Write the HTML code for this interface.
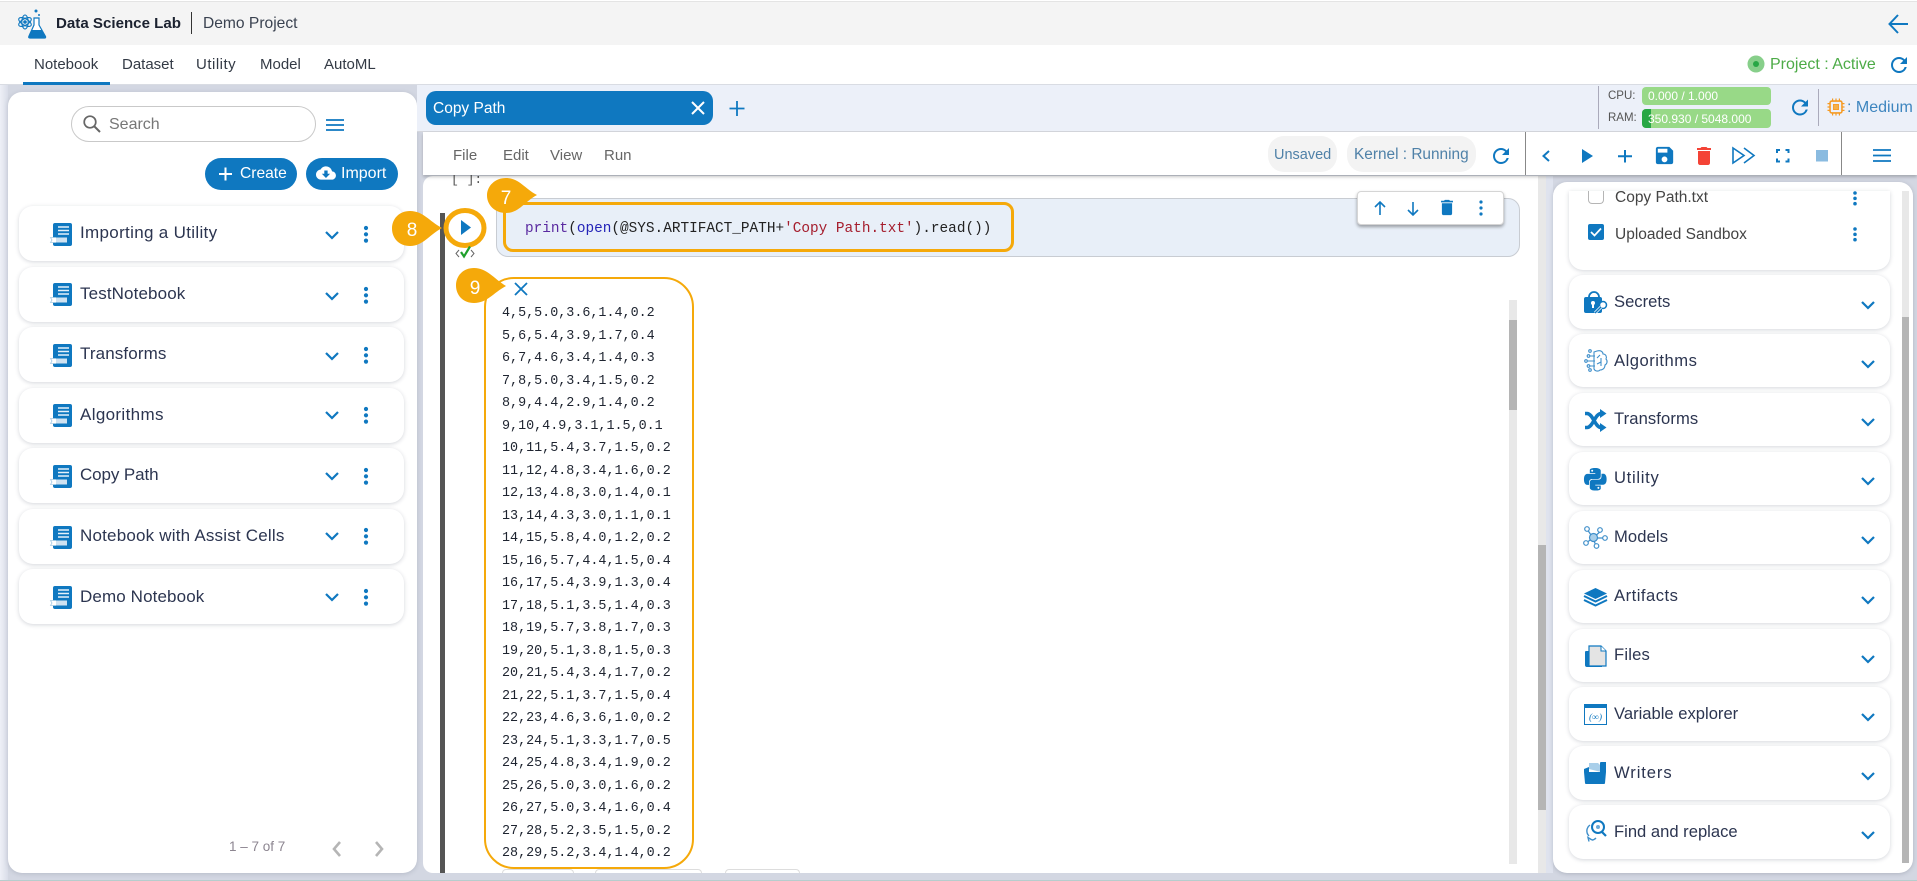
<!DOCTYPE html>
<html lang="en"><head><meta charset="utf-8"><title>Data Science Lab</title>
<style>
html,body{margin:0;padding:0;width:1917px;height:881px;overflow:hidden;background:#d3d7e2;font-family:"Liberation Sans",sans-serif;color:#2b3350}
.b{position:absolute;box-sizing:border-box}
.t{position:absolute;white-space:nowrap;line-height:20px;height:20px}
.card{position:absolute;background:#fff;border-radius:14px;box-shadow:0 1px 4px rgba(60,70,90,.22)}
.l{font-size:17px;left:80px;letter-spacing:.12px;color:#2c3550}
.r{font-size:16.6px;left:1614px;color:#2c3550}
.n{font-size:15px;top:55px;color:#333a45}
.m{font-size:15px;top:146px;color:#666}
.out{position:absolute;left:502px;top:303px;font:13.4px/22.5px "Liberation Mono",monospace;color:#1e2430;white-space:pre;margin:0}
svg.o{position:absolute;left:0;top:0;z-index:5}
.top{z-index:6}
</style></head><body>
<!-- page frame -->
<div class="b" style="left:0;top:0;width:1917px;height:1px;background:#fff"></div>
<div class="b" style="left:0;top:1px;width:1917px;height:44px;background:#f4f4f4;border-top:1px solid #e4e4e4"></div>
<div class="b" style="left:0;top:45px;width:1917px;height:40px;background:#fff;border-bottom:1px solid #d9dce3"></div>
<div class="b" style="left:0;top:85px;width:8px;height:795px;background:linear-gradient(90deg,#eef0f7,#d9dde8)"></div>
<div class="b" style="left:0;top:880px;width:1917px;height:1px;background:#b6cdcd"></div>
<div class="b" style="left:23px;top:82px;width:87px;height:3px;background:#0f78c0"></div>
<div class="t" style="left:56px;top:14px;font-size:15.1px;font-weight:bold;color:#1c2230">Data Science Lab</div>
<div class="b" style="left:191px;top:12px;width:1px;height:22px;background:#333"></div>
<div class="t" style="left:203px;top:14px;font-size:15.6px;color:#3a4250">Demo Project</div>
<div class="t n" style="left:34px">Notebook</div><div class="t n" style="left:122px">Dataset</div><div class="t n" style="left:196px;letter-spacing:.5px">Utility</div><div class="t n" style="left:260px">Model</div><div class="t n" style="left:324px">AutoML</div>
<div class="t" style="left:1770px;top:55px;font-size:16px;color:#4dab47">Project : Active</div>

<!-- left panel -->
<div class="b" style="left:8px;top:92px;width:409px;height:781px;background:#fff;border-radius:14px;box-shadow:0 1px 5px rgba(70,80,100,.2)"></div>
<div class="b" style="left:71px;top:106px;width:245px;height:36px;border:1px solid #c9c9c9;border-radius:18px;background:#fff"></div>
<div class="t" style="left:109px;top:115px;font-size:16px;color:#777">Search</div>
<div class="b" style="left:205px;top:158px;width:92px;height:32px;border-radius:16px;background:#0f78c0"></div>
<div class="t" style="left:240px;top:164px;font-size:15.6px;color:#fff">Create</div>
<div class="b" style="left:306px;top:158px;width:92px;height:32px;border-radius:16px;background:#0f78c0"></div>
<div class="t" style="left:341px;top:164px;font-size:16px;color:#fff">Import</div>
<div class="card" style="left:19px;top:206px;width:385px;height:55px"></div>
<div class="card" style="left:19px;top:267px;width:385px;height:55px"></div>
<div class="card" style="left:19px;top:327px;width:385px;height:55px"></div>
<div class="card" style="left:19px;top:388px;width:385px;height:55px"></div>
<div class="card" style="left:19px;top:448px;width:385px;height:55px"></div>
<div class="card" style="left:19px;top:509px;width:385px;height:55px"></div>
<div class="card" style="left:19px;top:569px;width:385px;height:55px"></div>
<div class="t l" style="top:223px;letter-spacing:.32px">Importing a Utility</div>
<div class="t l" style="top:284px">TestNotebook</div>
<div class="t l" style="top:344px">Transforms</div>
<div class="t l" style="top:405px;letter-spacing:.35px">Algorithms</div>
<div class="t l" style="top:465px;letter-spacing:-.1px">Copy Path</div>
<div class="t l" style="top:526px;letter-spacing:.2px">Notebook with Assist Cells</div>
<div class="t l" style="top:587px">Demo Notebook</div>
<div class="t" style="left:229px;top:837px;font-size:13.5px;color:#8c8590">1 – 7 of 7</div>

<!-- tab bar -->
<div class="b" style="left:417px;top:85px;width:1500px;height:47px;background:#ecf0f9;border-bottom:1px solid #d5d7dd"></div>
<div class="b" style="left:426px;top:91px;width:287px;height:34px;background:#0f78c0;border-radius:10px"></div>
<div class="t" style="left:433px;top:99px;font-size:15.5px;color:#fff">Copy Path</div>
<div class="b" style="left:1598px;top:86px;width:1px;height:43px;background:#aab"></div>
<div class="t" style="left:1608px;top:86px;font-size:11.5px;color:#555">CPU:</div>
<div class="t" style="left:1608px;top:108px;font-size:11.5px;color:#555">RAM:</div>
<div class="b" style="left:1642px;top:87px;width:129px;height:18px;background:#98d987;border-radius:4px"></div>
<div class="b" style="left:1642px;top:109px;width:129px;height:19px;background:#98d987;border-radius:4px;overflow:hidden"><div style="width:9px;height:19px;background:#28a745"></div></div>
<div class="t" style="left:1648px;top:86px;font-size:12px;color:#fff">0.000 / 1.000</div>
<div class="t" style="left:1648px;top:109px;font-size:12px;color:#fff">350.930 / 5048.000</div>
<div class="b" style="left:1818px;top:89px;width:1px;height:37px;background:#aab"></div>
<div class="t" style="left:1847px;top:98px;font-size:16px;color:#3d85bf">: Medium</div>

<!-- notebook area -->
<div class="b" style="left:423px;top:176px;width:1115px;height:697px;background:#fff;border-radius:10px 0 0 10px"></div>
<div class="b" style="left:1538px;top:176px;width:8px;height:697px;background:#e8e8e8"></div>
<div class="b" style="left:1538px;top:545px;width:8px;height:265px;background:#b5b5b5"></div>
<div class="b" style="left:1546px;top:176px;width:7px;height:697px;background:#dfe3ee"></div>
<!-- toolbar -->
<div class="b" style="left:423px;top:132px;width:1494px;height:43px;background:#fff;box-shadow:0 2px 3px rgba(0,0,0,.22);z-index:2"></div>
<div class="t m top" style="left:453px">File</div><div class="t m top" style="left:503px">Edit</div><div class="t m top" style="left:550px">View</div><div class="t m top" style="left:604px">Run</div>
<div class="b top" style="left:1268px;top:136px;width:69px;height:36px;background:#f3f3f3;border-radius:16px"></div>
<div class="t top" style="left:1274px;top:145px;font-size:14.5px;color:#4f81a8">Unsaved</div>
<div class="b top" style="left:1347px;top:136px;width:129px;height:36px;background:#f3f3f3;border-radius:16px"></div>
<div class="t top" style="left:1354px;top:145px;font-size:15.4px;color:#4f81a8">Kernel : Running</div>
<div class="b top" style="left:1525px;top:132px;width:1px;height:43px;background:#888"></div>
<div class="b top" style="left:1841px;top:132px;width:1px;height:43px;background:#888"></div>

<!-- prompt -->
<div class="t" style="left:451px;top:170px;font:13px/20px 'Liberation Mono',monospace;color:#555">[ ]:</div>
<div class="b" style="left:440px;top:213px;width:5px;height:660px;background:#555"></div>
<!-- code cell -->
<div class="b" style="left:496px;top:198px;width:1024px;height:59px;background:#e8eff8;border:1px solid #c8ccd2;border-radius:12px"></div>
<div class="b" style="left:503px;top:202px;width:511px;height:50px;border:3px solid #f5a90a;border-radius:10px;z-index:3"></div>
<div class="t" style="left:525px;top:219px;font:14.4px/20px 'Liberation Mono',monospace;color:#222;z-index:3"><span style="color:#5a2aa0">print</span>(<span style="color:#2424b8">open</span>(@SYS.ARTIFACT_PATH+<span style="color:#a51d2d">'Copy Path.txt'</span>).read())</div>
<div class="b" style="left:1357px;top:191px;width:147px;height:34px;background:#fff;border:1px solid #d5d5d5;border-radius:4px;box-shadow:0 2px 3px rgba(0,0,0,.35);z-index:3"></div>
<!-- output -->
<div class="b" style="left:484px;top:277px;width:210px;height:592px;border:2px solid #f5a90a;border-radius:30px;background:#fff"></div>
<pre class="out">4,5,5.0,3.6,1.4,0.2
5,6,5.4,3.9,1.7,0.4
6,7,4.6,3.4,1.4,0.3
7,8,5.0,3.4,1.5,0.2
8,9,4.4,2.9,1.4,0.2
9,10,4.9,3.1,1.5,0.1
10,11,5.4,3.7,1.5,0.2
11,12,4.8,3.4,1.6,0.2
12,13,4.8,3.0,1.4,0.1
13,14,4.3,3.0,1.1,0.1
14,15,5.8,4.0,1.2,0.2
15,16,5.7,4.4,1.5,0.4
16,17,5.4,3.9,1.3,0.4
17,18,5.1,3.5,1.4,0.3
18,19,5.7,3.8,1.7,0.3
19,20,5.1,3.8,1.5,0.3
20,21,5.4,3.4,1.7,0.2
21,22,5.1,3.7,1.5,0.4
22,23,4.6,3.6,1.0,0.2
23,24,5.1,3.3,1.7,0.5
24,25,4.8,3.4,1.9,0.2
25,26,5.0,3.0,1.6,0.2
26,27,5.0,3.4,1.6,0.4
27,28,5.2,3.5,1.5,0.2
28,29,5.2,3.4,1.4,0.2</pre>
<div class="b" style="left:1509px;top:300px;width:8px;height:564px;background:#e8e8e8"></div>
<div class="b" style="left:1509px;top:320px;width:8px;height:90px;background:#b5b5b5"></div>
<div class="b" style="left:502px;top:869px;width:72px;height:4px;border:1px solid #ddd;border-bottom:0;border-radius:8px 8px 0 0"></div>
<div class="b" style="left:595px;top:869px;width:107px;height:4px;border:1px solid #ddd;border-bottom:0;border-radius:8px 8px 0 0"></div>
<div class="b" style="left:725px;top:869px;width:75px;height:4px;border:1px solid #ddd;border-bottom:0;border-radius:8px 8px 0 0"></div>

<!-- right panel -->
<div class="b" style="left:1553px;top:182px;width:360px;height:691px;background:#fff;border-radius:14px;box-shadow:0 1px 4px rgba(70,80,100,.25)"></div>
<div class="b" style="left:1902px;top:191px;width:7px;height:672px;background:#e8e8e8"></div>
<div class="b" style="left:1902px;top:317px;width:7px;height:546px;background:#b5b5b5"></div>
<div class="b" style="left:1569px;top:191px;width:321px;height:79px;background:#fff;border-radius:0 0 14px 14px;box-shadow:0 1px 4px rgba(60,70,90,.22)"></div>
<div class="b" style="left:1588px;top:191px;width:16px;height:13px;border:1px solid #b5b5b5;border-top:0;border-radius:0 0 4px 4px"></div>
<div class="t" style="left:1615px;top:188px;font-size:15.5px;color:#444">Copy Path.txt</div>
<div class="b" style="left:1588px;top:224px;width:16px;height:16px;background:#0f78c0;border-radius:2px"></div>
<div class="t" style="left:1615px;top:225px;font-size:15.5px;color:#444">Uploaded Sandbox</div>
<div class="card" style="left:1569px;top:275px;width:321px;height:54px"></div>
<div class="card" style="left:1569px;top:334px;width:321px;height:53px"></div>
<div class="card" style="left:1569px;top:393px;width:321px;height:53px"></div>
<div class="card" style="left:1569px;top:452px;width:321px;height:53px"></div>
<div class="card" style="left:1569px;top:511px;width:321px;height:53px"></div>
<div class="card" style="left:1569px;top:570px;width:321px;height:53px"></div>
<div class="card" style="left:1569px;top:629px;width:321px;height:53px"></div>
<div class="card" style="left:1569px;top:687px;width:321px;height:54px"></div>
<div class="card" style="left:1569px;top:746px;width:321px;height:54px"></div>
<div class="card" style="left:1569px;top:805px;width:321px;height:54px"></div>
<div class="t r" style="top:292px">Secrets</div>
<div class="t r" style="top:351px;letter-spacing:.5px">Algorithms</div>
<div class="t r" style="top:409px;letter-spacing:.1px">Transforms</div>
<div class="t r" style="top:468px;letter-spacing:.7px">Utility</div>
<div class="t r" style="top:527px;letter-spacing:.1px">Models</div>
<div class="t r" style="top:586px;letter-spacing:.5px">Artifacts</div>
<div class="t r" style="top:645px;letter-spacing:.2px">Files</div>
<div class="t r" style="top:704px">Variable explorer</div>
<div class="t r" style="top:763px;letter-spacing:.9px">Writers</div>
<div class="t r" style="top:822px">Find and replace</div>

<svg class="o" width="1917" height="881" viewBox="0 0 1917 881" xmlns="http://www.w3.org/2000/svg">
<defs>
<path id="re" d="M17.65 6.35A7.958 7.958 0 0 0 12 4c-4.42 0-7.99 3.58-7.99 8s3.57 8 7.99 8c3.73 0 6.84-2.55 7.73-6h-2.08A5.99 5.99 0 0 1 12 18c-3.31 0-6-2.69-6-6s2.69-6 6-6c1.66 0 3.14.69 4.22 1.78L13 11h7V4l-2.35 2.35z"/>
<path id="ch" d="M0 0L6 6L12 0" fill="none" stroke="#0f78c0" stroke-width="2.2"/>
<g id="dt" fill="#0f78c0"><circle cx="0" cy="0" r="2.1"/><circle cx="0" cy="6.300" r="2.100"/><circle cx="0" cy="12.600" r="2.100"/></g>
<g id="nb"><rect x="3" y="0" width="19" height="23" rx="2" fill="#0f78c0"/><path d="M8 4h11M8 7.5h11M8 11h11" stroke="#e6f1fa" stroke-width="1.6"/><rect x="6" y="14.5" width="11" height="5" fill="#cfe2f1"/><path d="M6 14.5H0.5l1.5 2.5-1.5 2.5H6" fill="#fff" stroke="#a9cbe4" stroke-width=".8"/></g>
</defs>
<!-- logo -->
<g fill="none" stroke="#0f78c0" stroke-width="1.1"><ellipse cx="25" cy="22" rx="7" ry="3.2" transform="rotate(30 25 22)"/><ellipse cx="25" cy="22" rx="7" ry="3.2" transform="rotate(90 25 22)"/><ellipse cx="25" cy="22" rx="7" ry="3.2" transform="rotate(150 25 22)"/></g>
<circle cx="25" cy="22" r="1.8" fill="#0f78c0"/>
<path d="M34 18h5v7l6.500 11.500q.5 1.500-1 1.500H30q-2 0-1-2l5-11z" fill="#fff" stroke="#0f78c0" stroke-width="1.2"/>
<path d="M31.500 30h10.500l3 6.500q.3 1.200-1 1.200H30q-1.500 0-.8-1.500z" fill="#0f78c0"/>
<circle cx="36" cy="11" r="1.500" fill="#0f78c0"/><circle cx="39" cy="15" r="1" fill="#0f78c0"/>
<!-- back arrow -->
<path d="M1908 30H1890M1898 21l-8.500 9 8.500 9" transform="translate(0,-6)" fill="none" stroke="#0f78c0" stroke-width="2"/>
<!-- project status -->
<circle cx="1756" cy="64" r="8.500" fill="#87cf8a"/><circle cx="1756" cy="64" r="3" fill="#28a745"/>
<use href="#re" transform="translate(1887,53)" fill="#0f78c0"/>
<!-- search -->
<circle cx="90" cy="122" r="5.800" fill="none" stroke="#666" stroke-width="1.700"/><path d="M94.500 126.500L100 132" stroke="#666" stroke-width="2"/>
<path d="M326 120h18M326 125h18M326 130h18" stroke="#0f78c0" stroke-width="1.700"/>
<path d="M219 174h13M225.500 167.500v13" stroke="#fff" stroke-width="2"/>
<path transform="translate(316,163) scale(.83)" fill="#fff" d="M19.350 10.040C18.670 6.590 15.640 4 12 4 9.110 4 6.600 5.640 5.350 8.040 2.340 8.360 0 10.910 0 14c0 3.310 2.690 6 6 6h13c2.760 0 5-2.240 5-5 0-2.640-2.050-4.780-4.650-4.960zM17 13l-5 5-5-5h3V9h4v4h3z"/>
<!-- left list icons -->
<use href="#nb" x="50" y="223"/><use href="#nb" x="50" y="283"/><use href="#nb" x="50" y="344"/><use href="#nb" x="50" y="404"/><use href="#nb" x="50" y="465"/><use href="#nb" x="50" y="526"/><use href="#nb" x="50" y="586"/>
<use href="#ch" x="326" y="232"/><use href="#ch" x="326" y="293"/><use href="#ch" x="326" y="353"/><use href="#ch" x="326" y="412"/><use href="#ch" x="326" y="473"/><use href="#ch" x="326" y="533"/><use href="#ch" x="326" y="594"/>
<use href="#dt" x="366" y="228"/><use href="#dt" x="366" y="289"/><use href="#dt" x="366" y="349"/><use href="#dt" x="366" y="409"/><use href="#dt" x="366" y="470"/><use href="#dt" x="366" y="530"/><use href="#dt" x="366" y="591"/>
<path d="M340 842l-6 7 6 7M376 842l6 7-6 7" fill="none" stroke="#b5b5b5" stroke-width="2.600"/>
<!-- tab -->
<path d="M692 102l12 12M704 102l-12 12" stroke="#fff" stroke-width="2"/>
<path d="M737 101v15M729.500 108.500h15" stroke="#0f78c0" stroke-width="1.800"/>
<!-- res refresh -->
<use href="#re" transform="translate(1788,95.500)" fill="#0f78c0"/>
<g transform="translate(1836,107) scale(.85) translate(-1838,-107)" fill="none" stroke="#f59a23" stroke-width="1.800"><rect x="1831" y="100" width="14" height="14" rx="2"/><rect x="1835" y="104" width="6" height="6" fill="#f5b04a" stroke-width="1"/><path d="M1834 97v3M1838 97v3M1842 97v3M1834 114v3M1838 114v3M1842 114v3M1828 103h3M1828 107h3M1828 111h3M1845 103h3M1845 107h3M1845 111h3" stroke-width="1.400"/></g>
<!-- toolbar icons -->
<use href="#re" transform="translate(1489,144)" fill="#0f78c0"/>
<path d="M1549 151l-5.500 5 5.500 5" fill="none" stroke="#0f78c0" stroke-width="2"/>
<path d="M1582 149l11 7-11 7z" fill="#0f78c0"/>
<path d="M1625 150v12.500M1618 156.200h14" stroke="#0f78c0" stroke-width="2"/>
<path transform="translate(1653,144) scale(.96)" fill="#0f78c0" d="M17 3H5c-1.110 0-2 .9-2 2v14c0 1.100.89 2 2 2h14c1.100 0 2-.9 2-2V7l-4-4zm-5 16c-1.660 0-3-1.340-3-3s1.340-3 3-3 3 1.340 3 3-1.340 3-3 3zm3-10H5V5h10v4z"/>
<path transform="translate(1692,144)" fill="#f44336" d="M6 19c0 1.100.9 2 2 2h8c1.100 0 2-.9 2-2V7H6v12zM19 4h-3.500l-1-1h-5l-1 1H5v2h14V4z"/>
<path d="M1733 148l11 7.500-11 7.500zM1744 148l10 7.500-10 7.500" fill="none" stroke="#0f78c0" stroke-width="1.600"/>
<path d="M1777 153v-3h3M1785.500 150h3v3M1788.500 158.500v3h-3M1780 161.500h-3v-3" fill="none" stroke="#0f78c0" stroke-width="2"/>
<rect x="1816" y="150" width="12" height="11.500" fill="#8abbe0"/>
<path d="M1873 150h18M1873 155.500h18M1873 161h18" stroke="#0f78c0" stroke-width="1.800"/>
<!-- cell toolbar -->
<path d="M1380 215v-13M1375 207l5-5 5 5M1413 202v13M1408 210l5 5 5-5" fill="none" stroke="#0f78c0" stroke-width="1.600"/>
<path transform="translate(1436.800,197.300) scale(.85)" fill="#0f78c0" d="M6 19c0 1.100.9 2 2 2h8c1.100 0 2-.9 2-2V7H6v12zM19 4h-3.500l-1-1h-5l-1 1H5v2h14V4z"/>
<g fill="#0f78c0"><circle cx="1481" cy="202" r="1.600"/><circle cx="1481" cy="208" r="1.600"/><circle cx="1481" cy="214" r="1.600"/></g>
<!-- play circle -->
<ellipse cx="465" cy="228" rx="19" ry="17.500" fill="#fff" stroke="#f5a90a" stroke-width="5"/>
<path d="M461 220l10 7.500-10 7.500z" fill="#0f78c0"/>
<path d="M459 250l-3 3.500 3 3.500M471 250l3 3.500-3 3.500" fill="none" stroke="#666" stroke-width="1"/>
<path d="M461 252l3 4.500 6-10" fill="none" stroke="#1fa02c" stroke-width="2.200"/>
<path d="M515 283l12 12M527 283l-12 12" stroke="#0f78c0" stroke-width="1.800"/>
<!-- badges -->
<path d="M506 178c13 0 18 10 31 17-13 7-18 18-31 18-11 0-19-8-19-17.500S495 178 506 178z" fill="#f5a90a"/>
<text x="506" y="204" font-family="Liberation Sans,sans-serif" font-size="19" fill="#fff" text-anchor="middle">7</text>
<path d="M410 211c13 0 19 10 32 17-13 7-19 18-32 18-11 0-18-8-18-17.500S399 211 410 211z" fill="#f5a90a"/>
<text x="412" y="236" font-family="Liberation Sans,sans-serif" font-size="19" fill="#fff" text-anchor="middle">8</text>
<path d="M474 268c13 0 19 10 32 18-13 7-19 17-32 17-11 0-18-8-18-17.500S463 268 474 268z" fill="#f5a90a"/>
<text x="475" y="294" font-family="Liberation Sans,sans-serif" font-size="19" fill="#fff" text-anchor="middle">9</text>
<!-- right top -->
<path d="M1591 232l3.500 3.500 6.500-7" fill="none" stroke="#fff" stroke-width="1.700"/>
<use href="#dt" transform="translate(1855,193) scale(.85)"/><use href="#dt" transform="translate(1855,229) scale(.85)"/>
<use href="#ch" x="1862" y="302"/><use href="#ch" x="1862" y="361"/><use href="#ch" x="1862" y="419"/><use href="#ch" x="1862" y="478"/><use href="#ch" x="1862" y="537"/><use href="#ch" x="1862" y="597"/><use href="#ch" x="1862" y="656"/><use href="#ch" x="1862" y="714"/><use href="#ch" x="1862" y="773"/><use href="#ch" x="1862" y="832"/>
<!-- secrets -->
<path d="M1589 303v-6a5 5 0 0 1 10 0v6" fill="none" stroke="#0f78c0" stroke-width="1.800"/><rect x="1584" y="297" width="18" height="16" rx="2" fill="#0f78c0"/><circle cx="1593" cy="303" r="2" fill="#fff"/><rect x="1592" y="303" width="2" height="5" fill="#fff"/><circle cx="1603" cy="305" r="3.500" fill="#fff" stroke="#0f78c0" stroke-width="1.500"/><path d="M1601 307l-6 6" stroke="#fff" stroke-width="3"/><path d="M1601 307l-6 6" stroke="#0f78c0" stroke-width="1.500"/>
<!-- algorithms -->
<g fill="none" stroke="#3f8fca" stroke-width="1.100"><path d="M1597 351c4-1 6 1 6 3 3 0 4 3 3 5 2 2 1 5-1 6 0 3-2 5-5 5-2 2-5 1-6-1V352z"/><path d="M1595 356h-5M1595 361h-8M1595 366h-5M1600 355l-3 3M1601 362l-4 2M1601 358v8"/><circle cx="1588.500" cy="356" r="1.300"/><circle cx="1586" cy="361" r="1.300"/><circle cx="1588.500" cy="366" r="1.300"/><circle cx="1590" cy="351" r="1.300"/><circle cx="1590" cy="370" r="1.300"/></g>
<!-- transforms -->
<path d="M1585 413.500h2c6 0 8 14 14 14M1585 427.500h2c6 0 8-14 14-14" fill="none" stroke="#0f78c0" stroke-width="3.500"/>
<path d="M1600 409l6.500 4.500-6.500 4.500zM1600 423l6.500 4.500-6.500 4.500z" fill="#0f78c0"/>
<!-- python -->
<path transform="translate(1584,468) scale(.94)" fill="#0f78c0" d="M14.250.18l.9.2.73.26.59.3.45.32.34.34.25.34.16.33.1.3.04.26.02.2-.01.13V8.500l-.05.63-.13.55-.21.46-.26.38-.3.31-.33.25-.35.19-.35.14-.33.1-.3.07-.26.04-.21.02H8.770l-.69.05-.59.14-.5.22-.41.27-.33.32-.27.35-.2.36-.15.37-.1.35-.07.32-.04.27-.02.21v3.060H3.170l-.21-.03-.28-.07-.32-.12-.35-.18-.36-.26-.36-.36-.35-.46-.32-.59-.28-.73-.21-.88-.14-1.050-.05-1.230.06-1.220.16-1.040.24-.87.32-.71.36-.57.4-.44.42-.33.42-.24.4-.16.36-.1.32-.05.24-.01h.16l.06.01h8.160v-.83H6.180l-.01-2.750-.02-.37.05-.34.11-.31.17-.28.25-.26.31-.23.38-.2.44-.18.51-.15.58-.12.64-.1.71-.06.77-.04.84-.02 1.270.05zm-6.300 1.980l-.23.33-.08.41.08.41.23.34.33.22.41.09.41-.09.33-.22.23-.34.08-.41-.08-.41-.23-.33-.33-.22-.41-.09-.41.09zm13.090 3.950l.28.06.32.12.35.18.36.27.36.35.35.47.32.59.28.73.21.88.14 1.040.05 1.230-.06 1.230-.16 1.040-.24.86-.32.71-.36.57-.4.45-.42.33-.42.24-.4.16-.36.09-.32.05-.24.02-.16-.01h-8.220v.82h5.840l.01 2.760.02.36-.05.34-.11.31-.17.29-.25.25-.31.24-.38.2-.44.17-.51.15-.58.13-.64.09-.71.07-.77.04-.84.01-1.270-.04-1.070-.14-.9-.2-.73-.25-.59-.3-.45-.33-.34-.34-.25-.34-.16-.33-.1-.3-.04-.25-.02-.2.01-.13v-5.340l.05-.64.13-.54.21-.46.26-.38.3-.32.33-.24.35-.2.35-.14.33-.1.3-.06.26-.04.21-.02.13-.01h5.840l.69-.05.59-.14.5-.21.41-.28.33-.32.27-.35.2-.36.15-.36.1-.35.07-.32.04-.28.02-.21V6.070h2.090l.14.01zm-6.470 14.250l-.23.33-.08.41.08.41.23.33.33.23.41.08.41-.08.33-.23.23-.33.08-.41-.08-.41-.23-.33-.33-.23-.41-.08-.41.08z"/>
<!-- models -->
<g stroke="#3f8fca" stroke-width="1.200" fill="#fff"><path d="M1593 538l-6-9M1593 538l9-8M1593 538h10M1593 538l-7 5M1593 538l3 8" fill="none"/><circle cx="1593.500" cy="537.500" r="4" fill="#a9cfea"/><circle cx="1587" cy="529" r="2.300"/><circle cx="1600" cy="530" r="2.300"/><circle cx="1605" cy="538" r="2.300"/><circle cx="1586" cy="543" r="2.300"/><circle cx="1596.500" cy="546" r="2.300"/></g>
<!-- artifacts -->
<path d="M1595.500 588l11.500 5.500-11.500 5.500-11.500-5.500z" fill="#0f78c0"/><path d="M1584 597l11.500 5.500 11.500-5.500M1584 601l11.500 5.500 11.500-5.500" transform="translate(0,-1)" fill="none" stroke="#0f78c0" stroke-width="2"/>
<!-- files -->
<path d="M1590 651h-4q-1 0-1 1v13q0 2 2 2h15v-3h-12z" fill="#0f78c0"/><path d="M1589 646h12l5 5v15h-17z" fill="#e4e4e4" stroke="#0f78c0" stroke-width="1.200"/><path d="M1601 646v5h5" fill="#fff" stroke="#0f78c0" stroke-width="1"/>
<!-- var -->
<rect x="1584.500" y="704.500" width="22" height="20" fill="#fff" stroke="#0f78c0"/><rect x="1584" y="704" width="23" height="4" fill="#0f78c0"/>
<text x="1595.500" y="720" font-family="Liberation Serif,serif" font-style="italic" font-size="9.500" fill="#0f78c0" text-anchor="middle">(∞)</text>
<!-- writers -->
<path d="M1584 772h22l-1 11q0 1-1 1h-18q-1 0-1-1z" fill="#0f78c0"/><path d="M1589 769v-6h9l3 3v6z" fill="#a9cfea"/><path d="M1584 772v-3l5-2v5zM1600 772v-9q0-1 1-1h5v10z" fill="#0f78c0"/>
<!-- find -->
<circle cx="1598" cy="827" r="6" fill="#fff" stroke="#0f78c0" stroke-width="2"/><circle cx="1598" cy="827" r="2" fill="#6aa9d8"/><path d="M1602 832l4 4" stroke="#0f78c0" stroke-width="2.200"/><path d="M1590 825c-4 3-4 8-1 11M1592 840l-4-2.500 1 4M1596 838c-1 1-2 2-4 2" fill="none" stroke="#3f8fca" stroke-width="1.400"/>
</svg>
</body></html>
